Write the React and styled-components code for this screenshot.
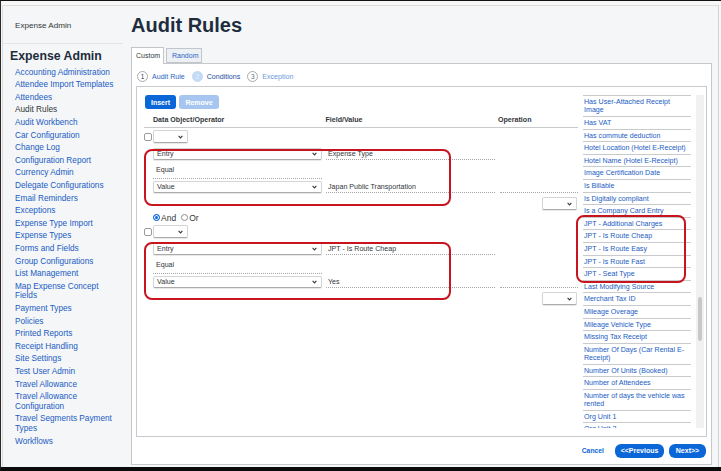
import React from 'react';
import styled, { createGlobalStyle } from 'styled-components';

const GlobalStyle = createGlobalStyle`
  * { box-sizing: border-box; }
  html, body { margin: 0; padding: 0; background: #000; }
  body { font-family: "Liberation Sans", Arial, sans-serif; }
  #root { width: 721px; height: 471px; overflow: hidden; }
`;

const Frame = styled.div`
  width: 721px;
  height: 471px;
  border-top: 1px solid #111;
  border-left: 1px solid #2a2a2a;
  border-bottom: 4px solid #0b0b0b;
  background: #f7f7f7;
  padding: 4px 2px 0 1px;
`;

const Page = styled.div`
  display: flex;
  height: 100%;
  background: #f5f6f7;
  border-top: 1px solid #dcdcdc;
  border-left: 1px solid #dcdcdc;
  border-right: 1px solid #cfd2d4;
`;

/* ---------- sidebar ---------- */
const Sidebar = styled.nav`
  width: 128px;
  flex: none;
  display: flex;
  flex-direction: column;
  padding-top: 14.5px;
`;

const TopLabel = styled.div`
  font-size: 8.1px;
  line-height: 10px;
  color: #32363a;
  padding: 0 0 12px 12px;
  margin-right: 8px;
  border-bottom: 1px solid #e2e4e6;
`;

const SideHeading = styled.div`
  margin-top: 5px;
  padding-left: 7px;
  font-size: 12.3px;
  line-height: 14px;
  font-weight: 700;
  color: #1d2d3e;
`;

const LinkList = styled.ul`
  list-style: none;
  margin: 5.2px 0 0;
  padding: 0 12px 0 12px;
`;

const SideLink = styled.li`
  font-size: 8.25px;
  line-height: 9.6px;
  margin-bottom: 3px;
  color: ${p => (p.$current ? '#32363a' : '#1b5cc4')};
`;

/* ---------- main ---------- */
const Main = styled.main`
  flex: 1;
  min-width: 0;
  display: flex;
  flex-direction: column;
  padding: 7px 6px 2px 0;
`;

const Title = styled.h1`
  margin: 0;
  font-size: 20px;
  line-height: 24px;
  font-weight: 700;
  color: #1d2d3e;
`;

const Tabs = styled.div`
  display: flex;
  align-items: flex-end;
  gap: 2px;
  height: 16px;
  margin-top: 10px;
`;

const Tab = styled.div`
  position: relative;
  z-index: 1;
  display: flex;
  align-items: center;
  height: ${p => (p.$active ? '17px' : '15px')};
  margin-bottom: ${p => (p.$active ? '-1px' : '0')};
  padding: ${p => (p.$active ? '0 0 1px 4px' : '0 0 0 5px')};
  width: ${p => p.$w}px;
  font-size: 7px;
  color: ${p => (p.$active ? '#32363a' : '#2a64c4')};
  background: ${p => (p.$active ? '#fff' : '#edf1f5')};
  border: 1px solid #c3c6c9;
  border-bottom: ${p => (p.$active ? 'none' : '1px solid #c3c6c9')};
`;

const Panel = styled.section`
  flex: 1;
  display: flex;
  flex-direction: column;
  background: #fff;
  border: 1px solid #c6c9cc;
`;

const Steps = styled.div`
  display: flex;
  align-items: center;
  padding: 7px 0 4px 5px;
`;

const StepCircle = styled.span`
  width: 11px;
  height: 11px;
  border-radius: 50%;
  display: flex;
  align-items: center;
  justify-content: center;
  font-size: 6.5px;
  color: ${p => (p.$filled ? '#e8f1fc' : p.$muted ? '#6a6d70' : '#32363a')};
  background: ${p => (p.$filled ? '#c3daf6' : '#fff')};
  border: 1px solid ${p => (p.$filled ? '#c3daf6' : '#a8abae')};
  margin-left: ${p => (p.$first ? '0' : '7px')};
`;

const StepLabel = styled.span`
  margin-left: 4px;
  font-size: 7.1px;
  color: ${p => p.$c};
`;

const InnerBox = styled.div`
  position: relative;
  height: 351px;
  margin: 0 4px;
  display: flex;
  gap: 5px;
  padding: 8px 7px 0 7px;
  border: 1px solid #c8cacc;
`;

const FormCol = styled.div`
  width: 434px;
  flex: none;
`;

const Toolbar = styled.div`
  display: flex;
  gap: 3px;
  margin-left: 1px;
`;

const Btn = styled.button`
  height: 14px;
  width: ${p => p.$w}px;
  margin-left: ${p => p.$ml || 0}px;
  padding: 0;
  border: none;
  border-radius: ${p => p.$r || 3}px;
  font-family: inherit;
  font-size: 7px;
  font-weight: 700;
  color: #fff;
  background: ${p => (p.$disabled ? '#a6c6f0' : '#0b66d8')};
`;

const gridCols = '9px 169px 176px 1fr';

const HeaderRow = styled.div`
  display: grid;
  grid-template-columns: ${gridCols};
  margin-top: 5px;
  height: 14px;
  border-bottom: 1px solid #c8cacc;
  font-size: 7.1px;
  line-height: 13px;
  font-weight: 700;
  color: #32363a;
`;

const HeadCell = styled.div`
  grid-column: ${p => p.$col};
  padding-left: ${p => p.$pl || 0}px;
`;

const CondHead = styled.div`
  display: flex;
  align-items: center;
  height: 13px;
  margin-top: ${p => p.$mt || 0}px;
`;

const Check = styled.span`
  width: 8px;
  height: 8px;
  margin-right: 1px;
  border: 1px solid #9a9c9e;
  border-radius: 2px;
  background: #fff;
`;

const SelectBox = styled.div`
  width: ${p => p.$w}px;
  height: ${p => p.$h}px;
  display: flex;
  align-items: center;
  justify-content: space-between;
  padding: 0 4px 0 3px;
  background: #fff;
  border: 1px solid #d2d4d6;
  border-bottom-color: #a9abad;
  border-radius: 2px;
  box-shadow: 0 1px 1px rgba(0, 0, 0, 0.1);
  font-size: 7.1px;
  color: #32363a;
  grid-column: ${p => p.$col || 'auto'};
  justify-self: ${p => p.$js || 'stretch'};
  margin-right: ${p => p.$mr || 0}px;
`;

const Line = styled.div`
  display: grid;
  grid-template-columns: ${gridCols};
  height: ${p => p.$h}px;
  margin-top: ${p => p.$mt || 0}px;
`;

const Dotted = styled.div`
  grid-column: ${p => p.$col};
  align-self: end;
  height: ${p => p.$h}px;
  margin-left: ${p => p.$ml || 0}px;
  margin-right: ${p => p.$mr || 0}px;
  padding-left: ${p => p.$pl || 0}px;
  border-bottom: 1px dotted #a3a5a8;
  font-size: 7.1px;
  line-height: ${p => p.$h}px;
  color: #32363a;
  white-space: nowrap;
`;

const AndOr = styled.div`
  display: flex;
  align-items: center;
  height: 15px;
  padding-left: 9px;
  font-size: 8.5px;
  color: #32363a;
`;

const Radio = styled.span`
  width: 7px;
  height: 7px;
  border-radius: 50%;
  border: 1px solid ${p => (p.$on ? '#0b66d8' : '#8d9093')};
  background: ${p => (p.$on ? '#0b66d8' : '#fff')};
  box-shadow: ${p => (p.$on ? 'inset 0 0 0 1px #fff' : 'none')};
  margin-left: ${p => p.$ml || 0}px;
  margin-right: 1px;
`;

const ListCol = styled.div`
  width: 108px;
  height: 333px;
  flex: none;
  overflow: hidden;
  border-top: 1px solid #c8cacc;
`;

const ListItem = styled.div`
  padding: 2px 1px 1.2px 1px;
  font-size: 7.1px;
  line-height: 8.4px;
  color: #1b5cc4;
  border-bottom: 1px solid #c8cacc;
`;

const ScrollTrack = styled.div`
  width: 8px;
  height: 333px;
  flex: none;
  background: #f1f1f1;
  display: flex;
  flex-direction: column;
  align-items: center;
`;

const ScrollThumb = styled.div`
  margin-top: 202px;
  width: 4px;
  height: 44px;
  border-radius: 2px;
  background: #c6c8ca;
`;

const Callout = styled.div`
  position: absolute;
  left: ${p => p.$x}px;
  top: ${p => p.$y}px;
  width: ${p => p.$w}px;
  height: ${p => p.$h}px;
  border: 2px solid #c8141f;
  border-radius: 8px;
  pointer-events: none;
`;

const Footer = styled.div`
  flex: 1;
  display: flex;
  align-items: center;
  justify-content: flex-end;
  padding-right: 5px;
`;

const CancelLink = styled.span`
  font-size: 6.8px;
  font-weight: 700;
  color: #0b66d8;
  margin-right: 11px;
`;

const Chevron = () => (
  <svg width="5" height="4" viewBox="0 0 5 4">
    <path d="M0.6 0.9 L2.5 2.9 L4.4 0.9" fill="none" stroke="#32363a" strokeWidth="1.1" />
  </svg>
);

const Select = ({ children, ...rest }) => (
  <SelectBox {...rest}>
    <span>{children}</span>
    <Chevron />
  </SelectBox>
);

const sideLinks = [
  'Accounting Administration',
  'Attendee Import Templates',
  'Attendees',
  'Audit Rules',
  'Audit Workbench',
  'Car Configuration',
  'Change Log',
  'Configuration Report',
  'Currency Admin',
  'Delegate Configurations',
  'Email Reminders',
  'Exceptions',
  'Expense Type Import',
  'Expense Types',
  'Forms and Fields',
  'Group Configurations',
  'List Management',
  'Map Expense Concept Fields',
  'Payment Types',
  'Policies',
  'Printed Reports',
  'Receipt Handling',
  'Site Settings',
  'Test User Admin',
  'Travel Allowance',
  'Travel Allowance Configuration',
  'Travel Segments Payment Types',
  'Workflows',
];

const fields = [
  'Has User-Attached Receipt Image',
  'Has VAT',
  'Has commute deduction',
  'Hotel Location (Hotel E-Receipt)',
  'Hotel Name (Hotel E-Receipt)',
  'Image Certification Date',
  'Is Billable',
  'Is Digitally compliant',
  'Is a Company Card Entry',
  'JPT - Additional Charges',
  'JPT - Is Route Cheap',
  'JPT - Is Route Easy',
  'JPT - Is Route Fast',
  'JPT - Seat Type',
  'Last Modifying Source',
  'Merchant Tax ID',
  'Mileage Overage',
  'Mileage Vehicle Type',
  'Missing Tax Receipt',
  'Number Of Days (Car Rental E-Receipt)',
  'Number Of Units (Booked)',
  'Number of Attendees',
  'Number of days the vehicle was rented',
  'Org Unit 1',
  'Org Unit 2',
];

const Condition = ({ field, value, mt }) => (
  <>
    <CondHead $mt={mt}>
      <Check />
      <Select $w={35} $h={13}></Select>
    </CondHead>
    <Line $h={12} $mt={5}>
      <Select $col={2} $w={169} $h={12}>Entry</Select>
      <Dotted $col={3} $h={12} $ml={4} $mr={3} $pl={2}>{field}</Dotted>
    </Line>
    <Line $h={19}>
      <Dotted $col={2} $h={17} $pl={3}>Equal</Dotted>
    </Line>
    <Line $h={12} $mt={2}>
      <Select $col={2} $w={169} $h={12}>Value</Select>
      <Dotted $col={3} $h={12} $ml={4} $mr={3} $pl={2}>{value}</Dotted>
      <Dotted $col={4} $h={12} $ml={2}></Dotted>
    </Line>
    <Line $h={13} $mt={4}>
      <Select $col={4} $js="end" $mr={1} $w={35} $h={13}></Select>
    </Line>
  </>
);

export default function App() {
  return (
    <>
      <GlobalStyle />
      <Frame>
        <Page>
          <Sidebar>
            <TopLabel>Expense Admin</TopLabel>
            <SideHeading>Expense Admin</SideHeading>
            <LinkList>
              {sideLinks.map(l => (
                <SideLink key={l} $current={l === 'Audit Rules'}>{l}</SideLink>
              ))}
            </LinkList>
          </Sidebar>
          <Main>
            <Title>Audit Rules</Title>
            <Tabs>
              <Tab $active $w={33}>Custom</Tab>
              <Tab $w={36}>Random</Tab>
            </Tabs>
            <Panel>
              <Steps>
                <StepCircle $first>1</StepCircle>
                <StepLabel $c="#2a64c4">Audit Rule</StepLabel>
                <StepCircle $filled>2</StepCircle>
                <StepLabel $c="#1f4f9e">Conditions</StepLabel>
                <StepCircle $muted>3</StepCircle>
                <StepLabel $c="#6b98dc">Exception</StepLabel>
              </Steps>
              <InnerBox>
                <FormCol>
                  <Toolbar>
                    <Btn $w={31}>Insert</Btn>
                    <Btn $w={40} $disabled>Remove</Btn>
                  </Toolbar>
                  <HeaderRow>
                    <HeadCell $col={2}>Data Object/Operator</HeadCell>
                    <HeadCell $col={3} $pl={3.5}>Field/Value</HeadCell>
                    <HeadCell $col={4}>Operation</HeadCell>
                  </HeaderRow>
                  <Condition mt={2} field="Expense Type" value="Japan Public Transportation" />
                  <AndOr>
                    <Radio $on />And
                    <Radio $ml={5} />Or
                  </AndOr>
                  <Condition field="JPT - Is Route Cheap" value="Yes" />
                </FormCol>
                <ListCol>
                  {fields.map(f => (
                    <ListItem key={f}>{f}</ListItem>
                  ))}
                </ListCol>
                <ScrollTrack>
                  <ScrollThumb />
                </ScrollTrack>
                <Callout $x={7} $y={62} $w={307} $h={57} />
                <Callout $x={7} $y={155} $w={307} $h={58} />
                <Callout $x={439} $y={128} $w={110} $h={68} />
              </InnerBox>
              <Footer>
                <CancelLink>Cancel</CancelLink>
                <Btn $w={49} $r={6}>&lt;&lt;Previous</Btn>
                <Btn $w={37} $r={6} $ml={5}>Next&gt;&gt;</Btn>
              </Footer>
            </Panel>
          </Main>
        </Page>
      </Frame>
    </>
  );
}
